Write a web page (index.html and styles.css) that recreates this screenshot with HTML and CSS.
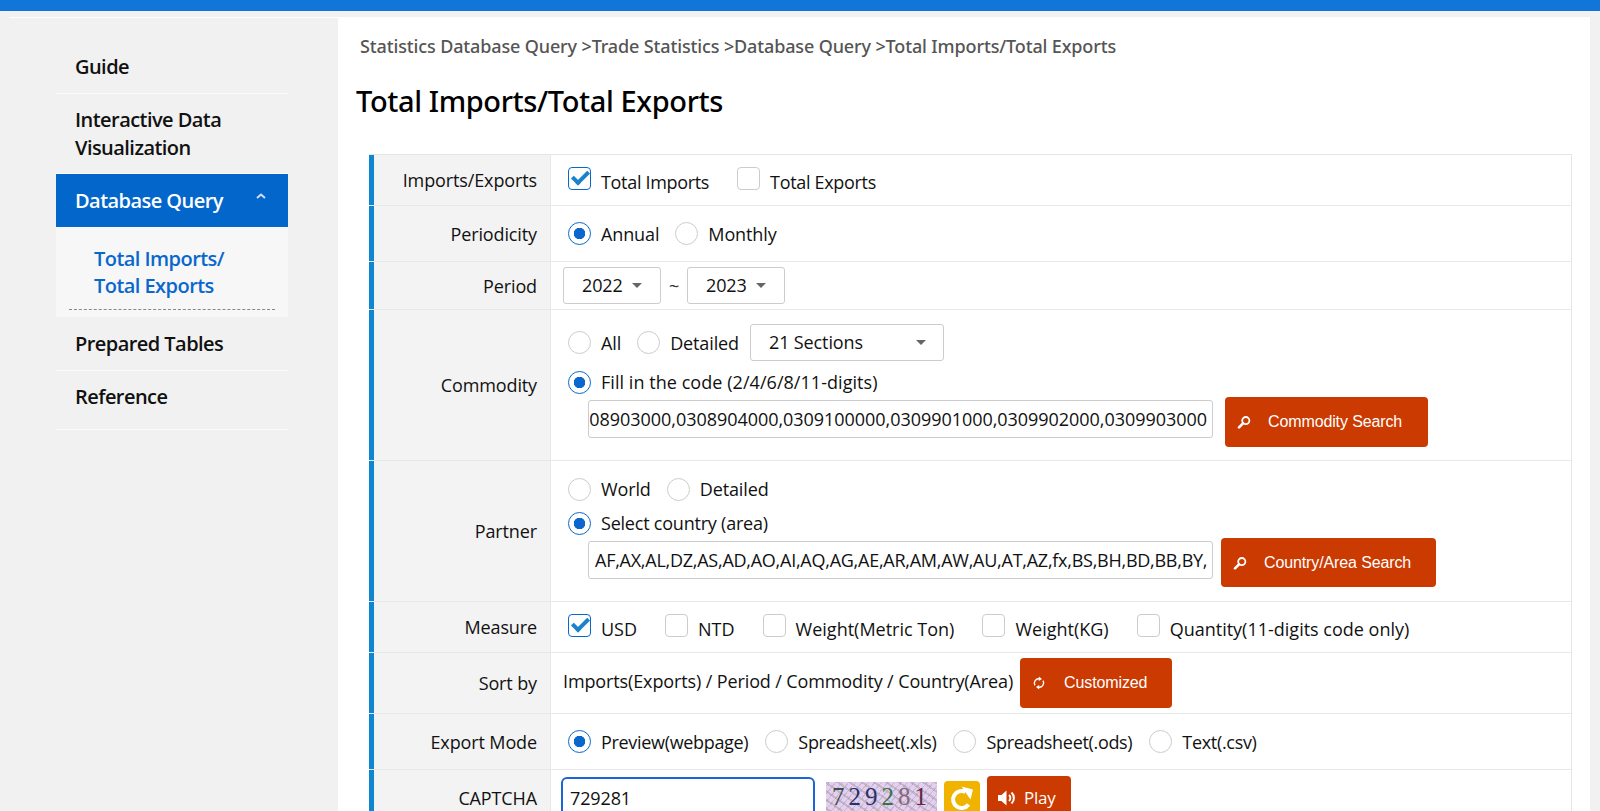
FILE: index.html
```html
<!DOCTYPE html>
<html lang="en">
  <head>
    <meta charset="UTF-8" />
    <title>Total Imports/Total Exports</title>
    <meta name="viewport" content="width=device-width, initial-scale=1.0" />
    <link rel="stylesheet" href="styles.css">
  </head>
  <body>
    <div class="top-bar"></div>
    <div class="page">
      <nav class="sidebar">
        <a class="nav-item">Guide</a>
        <a class="nav-item nav-two">Interactive Data<br />Visualization</a>
        <a class="nav-item nav-open">Database Query
          <svg class="nav-caret" viewBox="0 0 10 6" width="10" height="6"><path d="M1 5 L5 1.5 L9 5" fill="none" stroke="#cfe0f5" stroke-width="2" /></svg>
        </a>
        <div class="nav-sub">
          <a class="nav-sub-item">Total Imports/<br />Total Exports</a>
        </div>
        <a class="nav-item nav-after">Prepared Tables</a>
        <a class="nav-item nav-last">Reference</a>
      </nav>

      <main class="content">
        <div class="breadcrumb">Statistics Database Query &gt;Trade Statistics &gt;Database Query &gt;Total Imports/Total Exports</div>
        <h1>Total Imports/Total Exports</h1>

        <form class="query">
          <div class="row row-type">
            <div class="row-label">Imports/Exports</div>
            <div class="row-value">
              <label class="opt opt-check"><input type="checkbox" checked />Total Imports</label>
              <label class="opt opt-check"><input type="checkbox" />Total Exports</label>
            </div>
          </div>

          <div class="row row-period-type">
            <div class="row-label">Periodicity</div>
            <div class="row-value">
              <label class="opt"><input type="radio" name="per" checked />Annual</label>
              <label class="opt"><input type="radio" name="per" />Monthly</label>
            </div>
          </div>

          <div class="row row-period">
            <div class="row-label">Period</div>
            <div class="row-value row-tight">
              <div class="select select-year">2022</div>
              <span class="tilde">~</span>
              <div class="select select-year">2023</div>
            </div>
          </div>

          <div class="row row-commodity">
            <div class="row-label">Commodity</div>
            <div class="row-value row-stack">
              <div class="line line-a">
                <label class="opt"><input type="radio" name="com" />All</label>
                <label class="opt"><input type="radio" name="com" />Detailed</label>
                <div class="select select-wide">21 Sections</div>
              </div>
              <div class="line line-b">
                <label class="opt"><input type="radio" name="com" checked />Fill in the code (2/4/6/8/11-digits)</label>
              </div>
              <div class="line line-c">
                <div class="code-box code-end"><span>0308902000,0308903000,0308904000,0309100000,0309901000,0309902000,0309903000</span></div>
                <button type="button" class="btn btn-commodity">
                  <svg class="btn-icon" viewBox="0 0 14 14" width="14" height="14"><circle cx="8.8" cy="5.6" r="3.6" fill="none" stroke="#fff" stroke-width="1.8" /><path d="M6 8.4 L2 12.4" stroke="#fff" stroke-width="2.6" stroke-linecap="round" /></svg>
                  Commodity Search
                </button>
              </div>
            </div>
          </div>

          <div class="row row-partner">
            <div class="row-label">Partner</div>
            <div class="row-value row-stack">
              <div class="line line-d">
                <label class="opt"><input type="radio" name="par" />World</label>
                <label class="opt"><input type="radio" name="par" />Detailed</label>
              </div>
              <div class="line line-e">
                <label class="opt"><input type="radio" name="par" checked />Select country (area)</label>
              </div>
              <div class="line line-f">
                <div class="code-box code-start"><span>AF,AX,AL,DZ,AS,AD,AO,AI,AQ,AG,AE,AR,AM,AW,AU,AT,AZ,fx,BS,BH,BD,BB,BY,</span></div>
                <button type="button" class="btn btn-country">
                  <svg class="btn-icon" viewBox="0 0 14 14" width="14" height="14"><circle cx="8.8" cy="5.6" r="3.6" fill="none" stroke="#fff" stroke-width="1.8" /><path d="M6 8.4 L2 12.4" stroke="#fff" stroke-width="2.6" stroke-linecap="round" /></svg>
                  Country/Area Search
                </button>
              </div>
            </div>
          </div>

          <div class="row row-measure">
            <div class="row-label">Measure</div>
            <div class="row-value">
              <label class="opt opt-check"><input type="checkbox" checked />USD</label>
              <label class="opt opt-check"><input type="checkbox" />NTD</label>
              <label class="opt opt-check"><input type="checkbox" />Weight(Metric Ton)</label>
              <label class="opt opt-check"><input type="checkbox" />Weight(KG)</label>
              <label class="opt opt-check"><input type="checkbox" />Quantity(11-digits code only)</label>
            </div>
          </div>

          <div class="row row-sort">
            <div class="row-label">Sort by</div>
            <div class="row-value row-tight">
              <span class="sort-text">Imports(Exports) / Period / Commodity / Country(Area)</span>
              <button type="button" class="btn btn-custom">
                <svg class="btn-icon" viewBox="0 0 14 14" width="14" height="14"><path d="M3 9.4 A4.4 4.4 0 0 1 7.6 2.8 M11 4.6 A4.4 4.4 0 0 1 6.4 11.2" fill="none" stroke="#fff" stroke-width="1.4" /><path d="M6.8 0.4 L10 2.9 L6.8 5 Z M7.2 13.6 L4 11.1 L7.2 9 Z" fill="#fff" /></svg>
                Customized
              </button>
            </div>
          </div>

          <div class="row row-export">
            <div class="row-label">Export Mode</div>
            <div class="row-value">
              <label class="opt"><input type="radio" name="exp" checked />Preview(webpage)</label>
              <label class="opt"><input type="radio" name="exp" />Spreadsheet(.xls)</label>
              <label class="opt"><input type="radio" name="exp" />Spreadsheet(.ods)</label>
              <label class="opt"><input type="radio" name="exp" />Text(.csv)</label>
            </div>
          </div>

          <div class="row row-captcha">
            <div class="row-label">CAPTCHA</div>
            <div class="row-value row-tight">
              <input class="captcha-input" type="text" value="729281" />
              <div class="captcha-img">
                <span class="d1">7</span><span class="d2">2</span><span class="d3">9</span><span class="d4">2</span><span class="d5">8</span><span class="d6">1</span>
              </div>
              <button type="button" class="btn-reload" aria-label="Reload">
                <svg viewBox="0 0 28 28" width="28" height="28"><path d="M20.5 19.5 A8.5 8.5 0 1 1 17.5 7" fill="none" stroke="#fff" stroke-width="4" /><path d="M13.5 1.5 L25 4.5 L22.5 14.5 Z" fill="#fff" /></svg>
              </button>
              <button type="button" class="btn btn-play">
                <svg class="play-icon" viewBox="0 0 20 18" width="20" height="18"><path d="M1 6 H4.5 L9.5 1.5 V16.5 L4.5 12 H1 Z" fill="#fff" /><path d="M12 6 A4 4 0 0 1 12 12 M14.5 3.5 A7.5 7.5 0 0 1 14.5 14.5" fill="none" stroke="#fff" stroke-width="2" /></svg>
                <span class="play-text">Play</span>
              </button>
            </div>
          </div>
        </form>
      </main>
    </div>
  </body>
</html>
```

FILE: styles.css
```css
html {
  overflow: hidden;
}
body {
  font-family: "Open Sans", "Noto Sans", sans-serif;
  font-size: 18px;
  letter-spacing: -0.12px;
  color: #111;
  background: #f1f1f1;
  margin: 0;
  height: 811px;
  overflow: hidden;
}
.top-bar {
  height: 11px;
  background: #1275d8;
}
.page {
  display: flex;
  margin-top: 6px;
  padding-right: 10px;
}

/* sidebar */
.sidebar {
  box-sizing: border-box;
  width: 338px;
  flex: none;
  padding: 24px 50px 0 56px;
  background: linear-gradient(#fff, #fff) no-repeat 9px 0 / 329px 1px;
  font-size: 20px;
  font-weight: 600;
  line-height: 28px;
  letter-spacing: -0.55px;
}
.nav-item {
  display: block;
  padding: 12px 19px;
  border-bottom: 1px solid #fafafa;
  color: #111;
}
.nav-two {
  padding-bottom: 11px;
}
.nav-open {
  display: flex;
  align-items: center;
  justify-content: space-between;
  padding: 13px 22px 12px 19px;
  background: #0366cb;
  border-bottom: 0;
  color: #fff;
}
.nav-caret {
  margin-top: -11px;
}
.nav-sub {
  padding: 18px 13px 7px;
  background: #f7f7f7;
  line-height: 27px;
}
.nav-sub-item {
  display: block;
  padding: 0 0 10px 25px;
  border-bottom: 1px dashed #888;
  color: #0a68cc;
}
.nav-after {
  padding-top: 13px;
}
.nav-last {
  padding-bottom: 18px;
}

/* main area */
.content {
  flex: 1;
  min-width: 0;
  background: #fff;
  height: 794px;
  overflow: hidden;
}
.breadcrumb {
  margin: 17px 0 0 22px;
  font-family: "Noto Sans", sans-serif;
  font-size: 18px;
  font-weight: 500;
  line-height: 24px;
  letter-spacing: -0.135px;
  color: #555;
}
h1 {
  margin: 23px 0 0 18px;
  font-family: "Noto Sans", sans-serif;
  font-size: 29px;
  font-weight: 500;
  line-height: 40px;
  letter-spacing: -0.38px;
  color: #000;
}
.query {
  margin: 33px 18px 0 31px;
  border-top: 1px solid #e6e6e6;
  border-right: 1px solid #e6e6e6;
}

/* rows */
.row {
  display: flex;
  box-sizing: border-box;
  border-bottom: 1px solid #e8e8e8;
}
.row-type { height: 51px; }
.row-period-type { height: 56px; }
.row-period { height: 48px; }
.row-commodity { height: 151px; }
.row-partner { height: 141px; }
.row-measure { height: 51px; }
.row-sort { height: 61px; }
.row-export { height: 56px; }
.row-captcha { height: 70px; border-bottom: 0; }

.row-type .opt { letter-spacing: -0.32px; }
.row-measure .opt { letter-spacing: 0; }
.row-export .opt { letter-spacing: -0.32px; margin-right: 17px; }

.row-label {
  box-sizing: border-box;
  width: 182px;
  flex: none;
  display: flex;
  align-items: center;
  justify-content: flex-end;
  padding-right: 13px;
  border-left: 5px solid #0f86d0;
  border-right: 1px solid #e8e8e8;
  background: #f3f3f3;
}
.row-value {
  flex: 1;
  min-width: 0;
  display: flex;
  align-items: center;
  padding-left: 17px;
}
.row-tight {
  padding-left: 12px;
}
.row-stack {
  flex-direction: column;
  align-items: stretch;
}
.line {
  display: flex;
  align-items: center;
}
.line-a { height: 37px; margin-top: 14px; }
.line-b { height: 30px; margin-top: 6px; letter-spacing: 0.05px; }
.line-c { height: 50px; margin-left: 20px; }
.line-d { height: 34px; margin-top: 11px; }
.line-e { height: 30px; margin-top: 2px; letter-spacing: -0.22px; }
.line-f { height: 49px; margin-left: 20px; }

/* checkboxes and radios */
.opt {
  display: flex;
  align-items: center;
  margin-right: 16px;
}
.opt-check {
  margin-right: 28px;
  padding-top: 4px;
}
.opt input {
  appearance: none;
  box-sizing: border-box;
  position: relative;
  width: 23px;
  height: 23px;
  margin: 0 10px 0 0;
  background: #fff;
  border: 1px solid #ccc;
}
.opt input[type="radio"] {
  border-radius: 50%;
}
.opt input[type="radio"]:checked {
  border-color: #0a68cc;
  background: radial-gradient(circle, #0a68cc 5.5px, #fff 6px);
}
.opt input[type="checkbox"] {
  border-radius: 4px;
  margin-top: -8px;
}
.opt input[type="checkbox"]:checked {
  border-color: #0a68cc;
}
.opt input[type="checkbox"]:checked::after {
  content: "";
  position: absolute;
  left: 3px;
  top: 3px;
  width: 13px;
  height: 6px;
  border-left: 4px solid #1a82cc;
  border-bottom: 4px solid #1a82cc;
  transform: rotate(-45deg);
}

/* select boxes */
.select {
  box-sizing: border-box;
  position: relative;
  height: 37px;
  line-height: 35px;
  padding-left: 18px;
  background: #fff;
  border: 1px solid #ccc;
  border-radius: 3px;
}
.select::after {
  content: "";
  position: absolute;
  top: 15px;
  right: 18px;
  border: 5px solid transparent;
  border-top: 5px solid #666;
  border-bottom: 0;
}
.select-year {
  width: 98px;
}
.select-wide {
  width: 194px;
  margin-left: -5px;
}
.select-wide::after {
  right: 17px;
}
.tilde {
  width: 26px;
  text-align: center;
  color: #333;
}

/* long code lists */
.code-box {
  box-sizing: border-box;
  width: 625px;
  height: 38px;
  flex: none;
  display: flex;
  align-items: center;
  margin-bottom: 6px;
  background: #fff;
  border: 1px solid #ccc;
  border-radius: 3px;
  overflow: hidden;
  white-space: nowrap;
}
.code-end {
  justify-content: flex-end;
  padding-right: 5px;
  letter-spacing: -0.04px;
}
.code-end span {
  flex: none;
}
.code-start {
  padding-left: 6px;
  letter-spacing: -0.25px;
}

/* buttons */
.btn {
  box-sizing: border-box;
  display: inline-flex;
  align-items: center;
  border: 0;
  border-radius: 4px;
  background: #cb3a00;
  color: #fff;
  font-family: "Liberation Sans", Arial, sans-serif;
  font-size: 16px;
  letter-spacing: -0.12px;
  padding: 0 0 0 12px;
}
.btn-icon {
  flex: none;
  margin-right: 17px;
}
.btn-commodity {
  width: 203px;
  height: 50px;
  margin-left: 12px;
}
.btn-country {
  width: 215px;
  height: 49px;
  margin-left: 8px;
}
.btn-custom {
  width: 152px;
  height: 50px;
  margin-left: 7px;
  margin-top: -1px;
}
.btn-custom .btn-icon {
  margin-right: 18px;
}
.sort-text {
  margin-bottom: 4px;
  white-space: nowrap;
}
.captcha-input {
  box-sizing: border-box;
  width: 254px;
  height: 42px;
  margin: 0 11px 0 -2px;
  padding: 0 7px;
  border: 2px solid #1a66d6;
  border-radius: 6px;
  font: inherit;
  letter-spacing: inherit;
  color: #111;
}
.captcha-img {
  box-sizing: border-box;
  width: 111px;
  height: 36px;
  margin-right: 7px;
  padding-left: 6px;
  font-family: "Liberation Serif", serif;
  font-size: 25px;
  letter-spacing: 4px;
  line-height: 30px;
  background:
    repeating-linear-gradient(35deg, rgba(140, 150, 140, 0.4) 0 2px, transparent 2px 7px),
    repeating-linear-gradient(-50deg, rgba(140, 150, 140, 0.35) 0 1px, transparent 1px 5px),
    #e6cdf2;
}
.d1 { color: #3f4e4e; }
.d2 { color: #25346a; }
.d3 { color: #25346a; }
.d4 { color: #38724a; }
.d5 { color: #86697a; }
.d6 { color: #622642; }
.btn-reload {
  box-sizing: border-box;
  width: 36px;
  height: 36px;
  margin-right: 7px;
  padding: 4px;
  border: 0;
  border-radius: 4px;
  background: #f0b400;
}
.btn-play {
  width: 84px;
  height: 46px;
  padding-left: 10px;
  font-family: "Open Sans", sans-serif;
  font-size: 17px;
  letter-spacing: -0.2px;
}
.play-icon {
  margin: -3px 7px 0 0;
}
.play-text {
  margin-top: -4px;
}
.row-captcha .row-value {
  align-items: flex-start;
  padding-top: 7px;
}
.row-captcha .btn-play {
  margin-top: -1px;
}
.row-captcha .row-label {
  align-items: flex-start;
  padding-top: 16px;
}
.row-captcha .captcha-img {
  margin-top: 5px;
}
.row-captcha .btn-reload {
  margin-top: 4px;
}
```
